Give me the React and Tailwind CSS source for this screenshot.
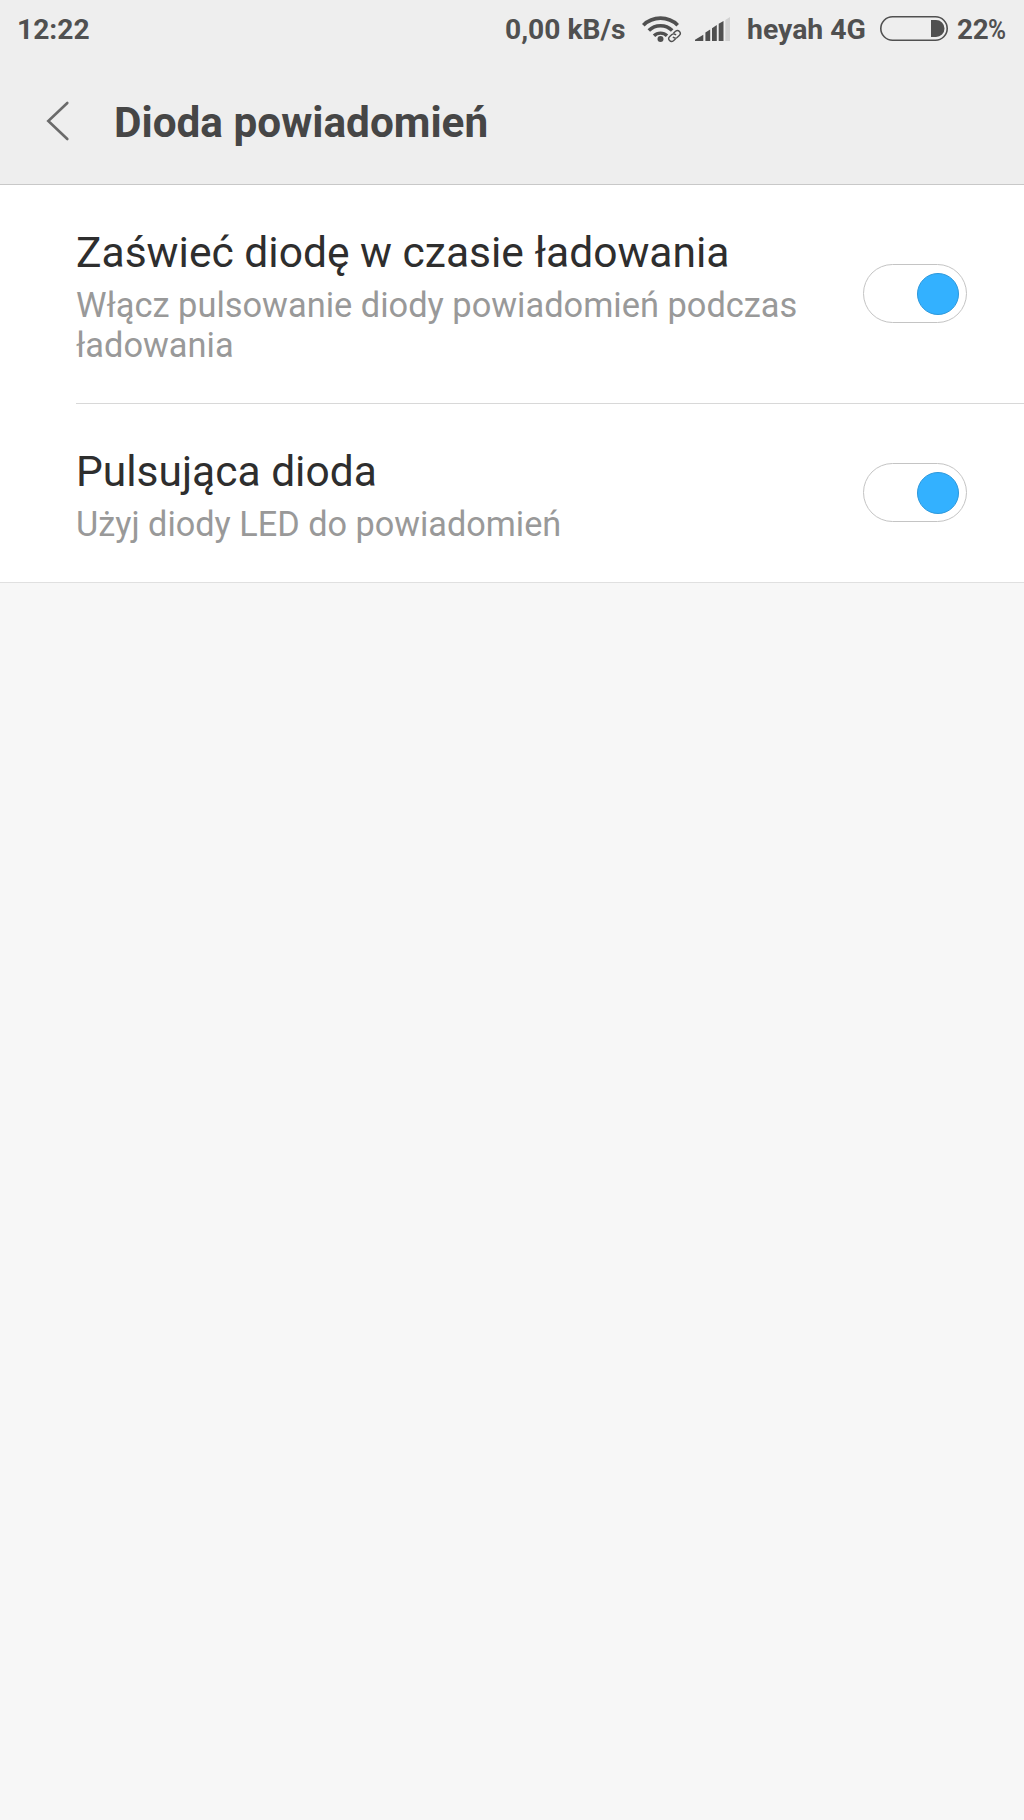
import React, { useState } from 'react';

const WifiIcon = () => (
  <svg className="w-[40px] h-[28px]" viewBox="0 0 40 28" fill="none" stroke="#505050">
    <path d="M1.3 10.2 A24.5 24.5 0 0 1 35.7 10.2" strokeWidth="3.7" />
    <path d="M6.8 15.6 A16.5 16.5 0 0 1 30.2 15.6" strokeWidth="3.6" />
    <path d="M12 20.8 A9.2 9.2 0 0 1 25 20.8" strokeWidth="3.4" />
    <circle cx="18.5" cy="24" r="3" fill="#505050" stroke="none" />
    {/* chain link badge */}
    <g transform="rotate(-42 32.5 21)" strokeWidth="1.4">
      <rect x="25" y="16.6" width="15" height="8.8" rx="4.4" fill="#eeeeee" stroke="none" />
      <path d="M31.5 23.8 H28.6 A2.8 2.8 0 0 1 28.6 18.2 H31.5 A2.8 2.8 0 0 1 34.2 21.4" />
      <path d="M33.5 18.2 H36.4 A2.8 2.8 0 0 1 36.4 23.8 H33.5 A2.8 2.8 0 0 1 30.8 20.6" />
    </g>
  </svg>
);

const SignalIcon = () => (
  <svg className="w-[35px] h-[24px]" viewBox="0 0 35 24" fill="#505050">
    <path d="M0 24 V22.8 L8.3 17.8 V24 Z" />
    <path d="M10.4 24 V15.6 L15.2 12.4 V24 Z" />
    <path d="M17 24 V11.2 L21.8 8 V24 Z" />
    <path d="M23.7 24 V6.8 L28.5 4 V24 Z" />
    <path d="M30.3 24 V3 L35 0 V24 Z" fill="#d2d2d2" />
  </svg>
);

const BatteryIcon = () => (
  <svg className="w-[68px] h-[25px]" viewBox="0 0 68 25">
    <rect x="0.8" y="0.8" width="66.4" height="23.4" rx="11.7" fill="none" stroke="#505050" strokeWidth="1.6" />
    <path d="M51 4 H56 A8.5 8.5 0 0 1 56 21 H51 Z" fill="#505050" />
  </svg>
);

const Toggle = ({ checked, onChange, label }) => (
  <button
    role="switch"
    aria-checked={checked}
    aria-label={label}
    onClick={onChange}
    className={`flex items-center w-[104px] h-[59px] shrink-0 rounded-full border border-[#c4c4c4] bg-white px-[7px] ${checked ? 'justify-end' : 'justify-start'}`}
  >
    <span className={`w-[42px] h-[42px] rounded-full border ${checked ? 'bg-[#33b1ff] border-[#2c98dc]' : 'bg-gray-200 border-gray-300'}`} />
  </button>
);

const App = () => {
  const [charging, setCharging] = useState(true);
  const [pulsing, setPulsing] = useState(true);

  return (
    <div className="w-[1024px] h-[1820px] overflow-hidden bg-[#f7f7f7] font-[Roboto,sans-serif]">
      {/* Header */}
      <header className="h-[185px] bg-[#eeeeee] border-b border-[#c8c8c8]">
        <div className="flex items-center h-[58px] pl-[17px] pr-[17px] text-[28.2px] font-bold text-[#505050] whitespace-nowrap">
          <span className="pt-[2px]">12:22</span>
          <div className="ml-auto flex items-center">
            <span className="w-[120px] pt-[2px]">0,00 kB/s</span>
            <span className="ml-[17px]"><WifiIcon /></span>
            <span className="ml-[13px]"><SignalIcon /></span>
            <span className="ml-[17px] w-[118px] pt-[2px] text-[28.4px]">heyah 4G</span>
            <span className="ml-[15px]"><BatteryIcon /></span>
            <span className="ml-[9px] w-[50px] pt-[1px] text-[27.8px] tracking-[-0.3px]">22<span className="inline-block origin-left scale-x-[0.88] font-semibold">%</span></span>
          </div>
        </div>
        <div className="flex items-center h-[127px] pl-[46px]">
          <svg className="w-[24px] h-[40px] mb-[1px]" viewBox="0 0 24 40" fill="none" stroke="#6a6a6a" strokeWidth="2.6" strokeLinecap="round">
            <path d="M21.3 2 L2.3 20 L21.3 38" />
          </svg>
          <h1 className="ml-[44px] pt-[3px] text-[42.3px] font-bold text-[#464646]">Dioda powiadomień</h1>
        </div>
      </header>

      {/* Settings */}
      <main className="bg-white border-b border-[#e0e0e0]">
        <div className="ml-[76px] h-[219px] pt-[43px] pr-[57px] flex border-b border-[#d8d8d8]">
          <div className="w-[740px]">
            <h2 className="text-[42.55px] leading-[50px] text-[#2e2e2e] whitespace-nowrap">Zaświeć diodę w czasie ładowania</h2>
            <p className="mt-[7px] text-[34.4px] leading-[40px] text-[#999999]">Włącz pulsowanie diody powiadomień podczas ładowania</p>
          </div>
          <div className="ml-auto mt-[36px]">
            <Toggle checked={charging} onChange={() => setCharging(!charging)} label="Zaświeć diodę w czasie ładowania" />
          </div>
        </div>
        <div className="ml-[76px] h-[178px] pt-[43px] pr-[57px] flex">
          <div>
            <h2 className="text-[42.5px] leading-[50px] text-[#2e2e2e]">Pulsująca dioda</h2>
            <p className="mt-[7px] text-[34.25px] leading-[40px] text-[#999999]">Użyj diody LED do powiadomień</p>
          </div>
          <div className="ml-auto mt-[16px]">
            <Toggle checked={pulsing} onChange={() => setPulsing(!pulsing)} label="Pulsująca dioda" />
          </div>
        </div>
      </main>
    </div>
  );
};

export default App;
